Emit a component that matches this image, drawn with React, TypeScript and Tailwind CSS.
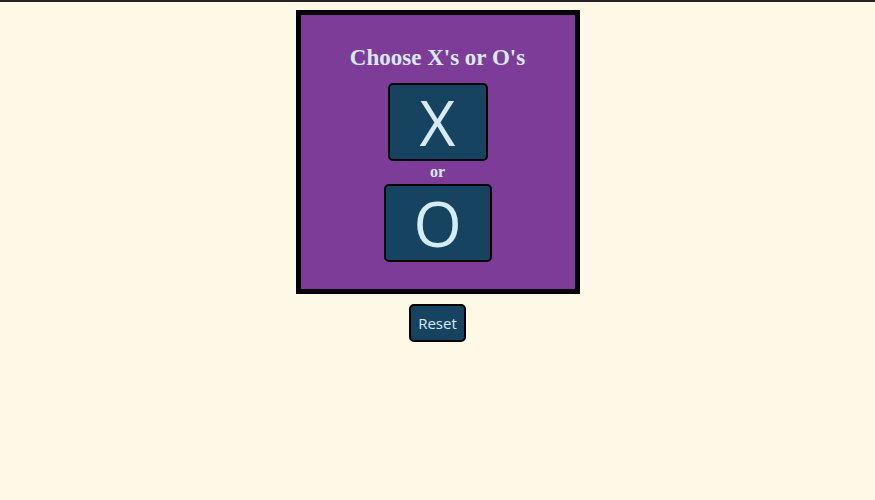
import React from "react";

export default function App() {
  return (
    <div className="min-h-[500px] w-full bg-[#fef9e7] border-t-2 border-[#222]">
      <div className="flex flex-col items-center">
        <div className="mt-[8px] w-[284px] h-[284px] border-[5px] border-black bg-[#7d3c98] flex flex-col items-center">
          <h1 className="mt-[30px] text-[23px] leading-[26px] font-bold text-[#d6eaf8] font-['Liberation_Serif','Times_New_Roman',serif]">
            Choose X's or O's
          </h1>
          <button className="mt-[12px] w-[100px] h-[78px] bg-[#154360] border-2 border-black rounded-[5px] text-[#d6eaf8] text-[62px] leading-none flex items-center justify-center font-['Open_Sans',sans-serif]">
            X
          </button>
          <div className="h-[22px] leading-[22px] text-[16px] font-bold text-[#d6eaf8] font-['Liberation_Serif','Times_New_Roman',serif]">
            or
          </div>
          <button className="mt-[1px] w-[108px] h-[78px] bg-[#154360] border-2 border-black rounded-[5px] text-[#d6eaf8] text-[62px] leading-none flex items-center justify-center font-['Open_Sans',sans-serif]">
            O
          </button>
        </div>
        <button className="mt-[10px] w-[57px] h-[38px] bg-[#154360] border-2 border-black rounded-[5px] text-[#d6eaf8] text-[15px] flex items-center justify-center font-['Open_Sans',sans-serif]">
          Reset
        </button>
      </div>
    </div>
  );
}
